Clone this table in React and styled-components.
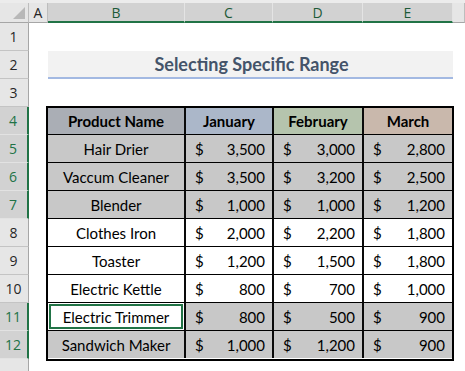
import styled, { createGlobalStyle } from "styled-components"

const GREEN = "#217346"

const GlobalStyle = createGlobalStyle`
  html, body { margin: 0; padding: 0; background: #fff; }
  body { width: 465px; height: 371px; overflow: hidden; }
`

const Window = styled.div`
  width: 465px;
  height: 371px;
  overflow: hidden;
  background: #fff;
  display: flex;
  flex-direction: column;
`

const HeaderBar = styled.div`
  display: flex;
  height: 23px;
  flex: none;
  box-sizing: border-box;
  padding-top: 3px;
  background: #ececec;
`

const Corner = styled.div`
  width: 29px;
  flex: none;
  box-sizing: border-box;
  background: #e6e6e6;
  border-right: 1px solid #bdbdbd;
  border-bottom: 1px solid #a6a6a6;
  display: flex;
  align-items: flex-end;
  justify-content: flex-end;
  padding: 0 3px 3px 0;
`

const ColHead = styled.div`
  width: ${(p) => (p.$w ? `${p.$w}px` : "auto")};
  flex: ${(p) => (p.$w ? "none" : "1")};
  box-sizing: border-box;
  display: flex;
  align-items: center;
  justify-content: center;
  background: ${(p) => (p.$sel ? "#d2d2d2" : "#e6e6e6")};
  border-right: 1px solid ${(p) => (p.$sel ? "#e4e4e4" : "#bdbdbd")};
  border-bottom: ${(p) => (p.$sel ? `2px solid ${GREEN}` : "1px solid #a6a6a6")};
  color: ${(p) => (p.$sel ? "#1d5a38" : "#262626")};
  font-family: "Open Sans", "Noto Sans", sans-serif;
  font-size: 14px;
`

const Body = styled.div`
  display: flex;
  flex: 1;
  min-height: 0;
`

const RowHeads = styled.div`
  width: 29px;
  flex: none;
  display: flex;
  flex-direction: column;
`

const RowHead = styled.div`
  height: 28px;
  flex: none;
  box-sizing: border-box;
  display: flex;
  align-items: center;
  justify-content: center;
  padding-right: 1px;
  background: ${(p) => (p.$sel ? "#d2d2d2" : "#e6e6e6")};
  border-bottom: 1px solid ${(p) => (p.$sel ? "#e2e2e2" : "#c4c4c4")};
  border-right: ${(p) => (p.$sel ? `2px solid ${GREEN}` : "1px solid #a6a6a6")};
  color: ${(p) => (p.$sel ? GREEN : "#262626")};
  font-family: "Open Sans", "Noto Sans", sans-serif;
  font-size: 14px;
`

const Cells = styled.div`
  flex: 1;
  padding-left: 19px;
  display: flex;
  flex-direction: column;
`

const EmptyRow = styled.div`
  height: 28px;
  flex: none;
`

const TitleRow = styled.div`
  width: 405px;
  height: 28px;
  flex: none;
  box-sizing: border-box;
  background: #f2f2f2;
  border-bottom: 2px solid #a3b9e2;
  display: flex;
  align-items: center;
  justify-content: center;
  padding-left: 2px;
  color: #44546a;
  font-family: Lato, "Liberation Sans", sans-serif;
  font-weight: 700;
  font-size: 18px;
`

const Table = styled.div`
  width: 408px;
  margin: -1px 0 0 -2px;
  box-sizing: border-box;
  border: 2px solid #000;
  display: grid;
  grid-template-columns: 138px 88px 90px 88px;
  grid-auto-rows: 28px;
  grid-template-rows: 27px;
  font-family: Lato, "Liberation Sans", sans-serif;
  font-size: 15px;
  color: #000;

  & > *:nth-last-child(-n + 4) {
    border-bottom: none;
    height: 27px;
  }
`

const Cell = styled.div`
  box-sizing: border-box;
  display: flex;
  align-items: center;
  justify-content: ${(p) => (p.$money ? "space-between" : "center")};
  padding: ${(p) => (p.$money ? "0 7px 0 9px" : "0")};
  background: ${(p) => p.$bg};
  border-bottom: 1px solid #000;
  border-right: ${(p) => (p.$last ? "none" : "2px solid #0a0a0a")};
  font-weight: ${(p) => (p.$head ? 700 : 400)};
  box-shadow: ${(p) => (p.$active ? `inset 0 0 0 1px #fff, inset 0 0 0 3px ${GREEN}` : "none")};
`

const GREY = "#c8c8c8"
const headFills = ["#aaaeb5", "#abb7c9", "#b5c4ad", "#c9b8ac"]

const rows = [
  ["Hair Drier", "3,500", "3,000", "2,800", true],
  ["Vaccum Cleaner", "3,500", "3,200", "2,500", true],
  ["Blender", "1,000", "1,000", "1,200", true],
  ["Clothes Iron", "2,000", "2,200", "1,800", false],
  ["Toaster", "1,200", "1,500", "1,800", false],
  ["Electric Kettle", "800", "700", "1,000", false],
  ["Electric Trimmer", "800", "500", "900", true],
  ["Sandwich Maker", "1,000", "1,200", "900", true],
]

const cols = [
  ["A", 19, false],
  ["B", 137, true],
  ["C", 88, true],
  ["D", 90, true],
  ["E", 90, true],
]

const selectedRows = [4, 5, 6, 7, 11, 12]

export default function App() {
  return (
    <>
      <GlobalStyle />
      <Window>
        <HeaderBar>
          <Corner>
            <svg width="12" height="12" viewBox="0 0 12 12">
              <polygon points="12,0 12,12 0,12" fill="#b8b8b8" />
            </svg>
          </Corner>
          {cols.map(([l, w, sel]) => (
            <ColHead key={l} $w={w} $sel={sel}>
              {l}
            </ColHead>
          ))}
          <ColHead />
        </HeaderBar>
        <Body>
          <RowHeads>
            {Array.from({ length: 12 }, (_, i) => (
              <RowHead key={i} $sel={selectedRows.includes(i + 1)}>
                {i + 1}
              </RowHead>
            ))}
            <RowHead />
          </RowHeads>
          <Cells>
            <EmptyRow />
            <TitleRow>Selecting Specific Range</TitleRow>
            <EmptyRow />
            <Table>
              {["Product Name", "January", "February", "March"].map((h, i) => (
                <Cell key={h} $head $bg={headFills[i]} $last={i === 3}>
                  {h}
                </Cell>
              ))}
              {rows.map(([name, jan, feb, mar, grey]) => {
                const active = name === "Electric Trimmer"
                const bg = grey ? GREY : "#fff"
                return [
                  <Cell key={name} $bg={active ? "#fff" : bg} $active={active}>
                    {name}
                  </Cell>,
                  ...[jan, feb, mar].map((v, i) => (
                    <Cell key={name + i} $money $bg={bg} $last={i === 2}>
                      <span>$</span>
                      <span>{v}</span>
                    </Cell>
                  )),
                ]
              })}
            </Table>
          </Cells>
        </Body>
      </Window>
    </>
  )
}
